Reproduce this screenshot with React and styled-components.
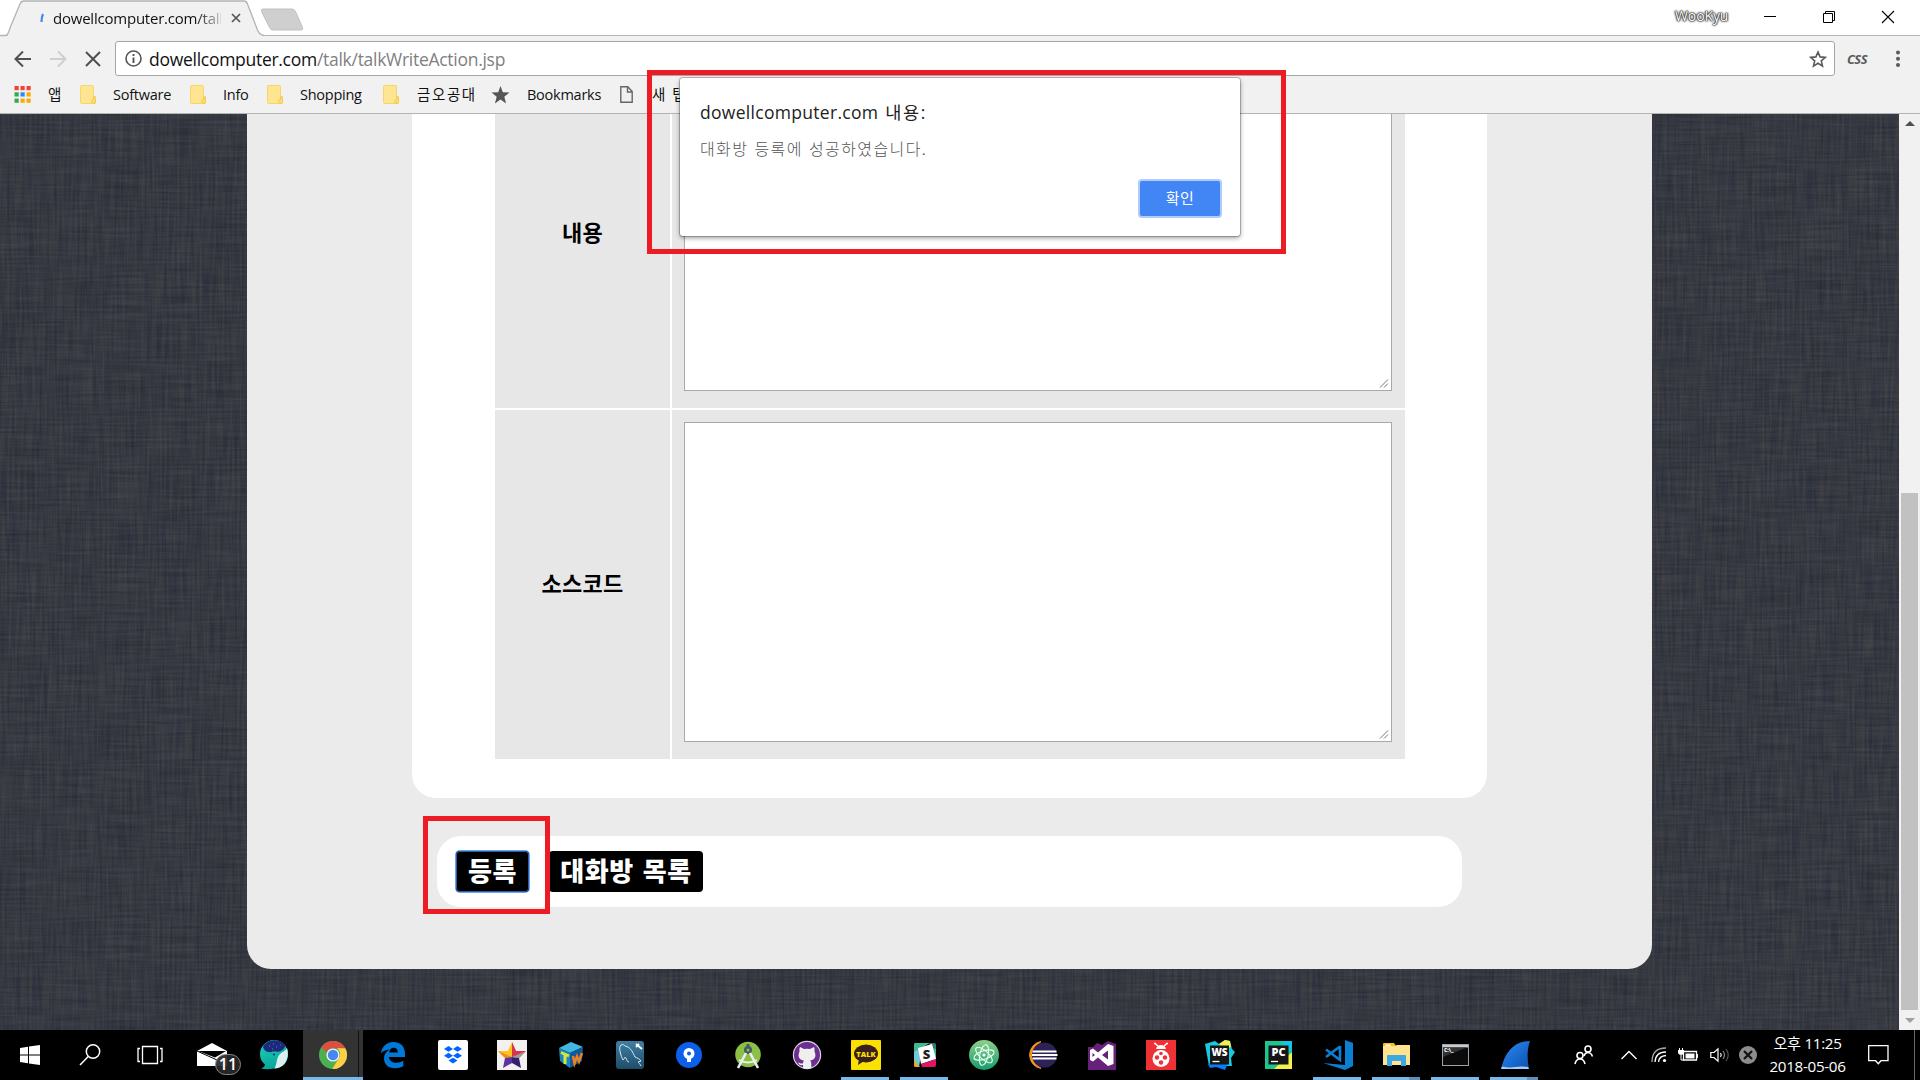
import React from "react";
import styled, { createGlobalStyle } from "styled-components";

const ui = '"Open Sans", "Noto Sans CJK KR", sans-serif';
const ko = '"Noto Sans CJK KR", sans-serif';

const Global = createGlobalStyle`
  *, *::before, *::after { box-sizing: border-box; }
  body { margin: 0; overflow: hidden; background: #000; }
  svg { display: block; flex: none; overflow: visible; }
`;

const Screen = styled.div`
  position: relative;
  display: flex;
  flex-direction: column;
  width: 1920px;
  height: 1080px;
  overflow: hidden;
  font-family: ${ui};
  color: #111;
`;

/* ---------- browser chrome ---------- */

const TitleBar = styled.header`
  display: flex;
  height: 36px;
  background: linear-gradient(#fff, #fff) top / 100% 35px no-repeat, #b4b4b4;
`;

const Tab = styled.div`
  position: relative;
  display: flex;
  align-items: center;
  width: 265px;
  height: 36px;
  padding-left: 40px;
`;

const TabShape = styled.svg`
  position: absolute;
  left: 0;
  top: 0;
`;

const TabTitle = styled.span`
  position: relative;
  margin-left: 9px;
  width: 168px;
  margin-right: 3px;
  height: 24px;
  line-height: 24px;
  overflow: hidden;
  white-space: nowrap;
  font-size: 15px;
  letter-spacing: -0.22px;
  -webkit-mask-image: linear-gradient(90deg, #000 142px, rgba(0, 0, 0, 0.2) 168px);
  mask-image: linear-gradient(90deg, #000 142px, rgba(0, 0, 0, 0.2) 168px);
`;

const Over = styled.span`
  position: relative;
  display: flex;
`;

const UserName = styled.span`
  margin-left: auto;
  width: 56px;
  line-height: 32px;
  font-size: 14px;
  letter-spacing: -0.1px;
  color: #fff;
  white-space: nowrap;
  text-shadow: 0 0 1px #222, 0 0 1px #222, 0 0 2px #333, 0 0 2px #444, 0 0 3px #888;
`;

const WindowControls = styled.div`
  display: flex;
  align-items: center;
  gap: 47px;
  height: 34px;
  padding: 0 26px 0 33px;
`;

const Toolbar = styled.div`
  display: flex;
  align-items: center;
  height: 46px;
  padding: 0 19px 0 14px;
  background: #f1f1f1;
`;

const NavButtons = styled.div`
  display: flex;
  flex: none;
  gap: 17px;
  width: 101px;
`;

const Omnibox = styled.div`
  display: flex;
  flex: none;
  align-items: center;
  width: 1720px;
  height: 35px;
  margin-top: -1px;
  padding: 0 7px 0 9px;
  border: 1px solid #a6a6a6;
  border-radius: 3px;
  background: #fff;
`;

const Url = styled.span`
  flex: 1;
  margin-left: 7px;
  font-size: 17.5px;
  line-height: 30px;
  letter-spacing: -0.28px;
  color: #808080;
  b { font-weight: 400; color: #111; }
`;

const CssBadge = styled.span`
  margin-left: 12px;
  margin-right: auto;
  font: italic 700 13px/20px "Open Sans", sans-serif;
  letter-spacing: -0.6px;
  color: #5a5a5a;
`;

const Bookmarks = styled.nav`
  display: flex;
  align-items: center;
  height: 32px;
  padding: 0 0 6px 14px;
  border-bottom: 1px solid #b4b4b4;
  background: #f1f1f1;
  white-space: nowrap;
`;

const Bookmark = styled.div`
  display: flex;
  align-items: center;
  gap: ${(p) => p.$gap || 17}px;
  width: ${(p) => p.$w}px;
  flex: none;
  font-size: 14.5px;
  line-height: 20px;
  letter-spacing: ${(p) => p.$ls || -0.25}px;
`;

/* ---------- page ---------- */

const Viewport = styled.main`
  position: relative;
  display: flex;
  height: 916px;
  overflow: hidden;
  background: #373a43;
`;

const Linen = styled.svg`
  position: absolute;
  inset: 0;
`;

const Container = styled.section`
  position: relative;
  width: 1405px;
  height: 855px;
  margin-left: 247px;
  border-radius: 0 0 24px 24px;
  background: #ebebeb;
  overflow: hidden;
`;

const Panel = styled.div`
  width: 1075px;
  height: 684px;
  margin-left: 165px;
  padding-left: 83px;
  border-radius: 0 0 24px 24px;
  background: #fff;
  overflow: hidden;
`;

const FormGrid = styled.div`
  display: grid;
  grid-template-columns: 175px 733px;
  grid-template-rows: 350px 349px;
  gap: 2px;
  margin-top: -56px;
`;

const Label = styled.div`
  display: flex;
  align-items: center;
  justify-content: center;
  padding-bottom: 5px;
  background: #e7e7e7;
  font: 700 22px/30px ${ko};
  letter-spacing: 0.2px;
  color: #000;
`;

const Field = styled.div`
  position: relative;
  padding: 12px 13px 0 12px;
  background: #e7e7e7;
`;

const Area = styled.textarea`
  display: block;
  width: 708px;
  height: ${(p) => p.$h}px;
  margin: 0;
  border: 1px solid #a9a9a9;
  border-radius: 0;
  background: #fff;
  outline: none;
  resize: none;
`;

const Grip = styled.svg`
  position: absolute;
  right: 16px;
  top: ${(p) => p.$y}px;
`;

const ButtonBar = styled.div`
  display: flex;
  align-items: flex-start;
  gap: 20px;
  width: 1025px;
  height: 71px;
  margin: 38px 0 0 190px;
  padding: 15px 0 0 19px;
  border-radius: 24px;
  background: #fff;
`;

const PageButton = styled.button`
  width: ${(p) => p.$w}px;
  height: 41px;
  padding: 0 0 4px;
  border: 0;
  border-radius: 4px;
  background: #000;
  box-shadow: ${(p) => (p.$focus ? "0 0 0 1px #6ea0f0, inset 0 0 0 1px #2d5ea8" : "none")};
  font: 900 26px/36px ${ko};
  letter-spacing: 0.6px;
  word-spacing: 2.5px;
  color: #fff;
  white-space: nowrap;
`;

const ScrollBar = styled.div`
  position: relative;
  display: flex;
  flex-direction: column;
  align-items: center;
  width: 21px;
  height: 916px;
  margin-left: auto;
  background: #f1f1f1;
`;

const ArrowBox = styled.div`
  display: flex;
  align-items: center;
  justify-content: center;
  height: 20px;
`;

const Thumb = styled.div`
  width: 17px;
  height: 518px;
  margin-top: 359px;
  background: #c1c1c1;
`;

/* ---------- overlays ---------- */

const Dialog = styled.div`
  position: absolute;
  left: 680px;
  top: 78px;
  width: 560px;
  height: 158px;
  display: flex;
  flex-direction: column;
  padding: 20px 20px 0;
  border-radius: 3px;
  background: #fff;
  box-shadow: 0 0 0 1px rgba(0, 0, 0, 0.22), 0 2px 5px rgba(0, 0, 0, 0.4);
`;

const DialogTitle = styled.div`
  height: 28px;
  font-size: 17.5px;
  line-height: 29px;
  letter-spacing: 0.3px;
  word-spacing: 2px;
  color: #222;
  white-space: nowrap;
  span { letter-spacing: 1.7px; }
`;

const DialogText = styled.div`
  margin-top: 10px;
  height: 24px;
  font: 300 16px/24px ${ko};
  letter-spacing: 1.4px;
  word-spacing: 1.2px;
  color: #555;
  white-space: nowrap;
`;

const DialogButton = styled.button`
  align-self: flex-end;
  width: 80px;
  height: 35px;
  margin-top: 21px;
  padding: 0 0 2px;
  border: 0;
  border-radius: 2px;
  background: #4285f4;
  box-shadow: 0 0 0 2px #b0ccfb;
  font: 400 15px/30px ${ko};
  letter-spacing: 0.5px;
  color: #fff;
`;

const Marker = styled.div`
  position: absolute;
  left: ${(p) => p.$x}px;
  top: ${(p) => p.$y}px;
  width: ${(p) => p.$w}px;
  height: ${(p) => p.$h}px;
  border: 5px solid #ed1c24;
`;

/* ---------- taskbar ---------- */

const Taskbar = styled.footer`
  display: flex;
  height: 50px;
  background: #000;
`;

const Slot = styled.div`
  position: relative;
  display: flex;
  align-items: center;
  justify-content: center;
  flex: none;
  width: ${(p) => p.$w || 59}px;
  height: 50px;
  background: ${(p) => (p.$active ? "#333" : "transparent")};
  color: #fff;
`;

const Underline = styled.i`
  position: absolute;
  left: ${(p) => (p.$full ? 0 : 5)}px;
  right: ${(p) => (p.$full ? 0 : 6)}px;
  bottom: 0;
  height: 3px;
  background: ${(p) =>
    p.$stack ? "linear-gradient(90deg, #76b9ed 77%, #5d8fb8 77%)" : "#76b9ed"};
`;

const StackEdge = styled.i`
  position: absolute;
  right: 0;
  top: 0;
  width: 5px;
  height: 50px;
  border-left: 1px solid #111;
`;

const Badge = styled.span`
  position: absolute;
  left: 35px;
  top: 24px;
  width: 26px;
  height: 21px;
  border: 1px solid #8a8a8a;
  border-radius: 11px;
  background: rgba(40, 40, 40, 0.93);
  font-size: 16px;
  font-weight: 600;
  line-height: 18px;
  text-align: center;
`;

const Tray = styled.div`
  display: flex;
  align-items: center;
  margin-left: auto;
  height: 50px;
  color: #fff;
`;

const TrayIcon = styled.div`
  display: flex;
  justify-content: center;
  width: ${(p) => p.$w}px;
`;

const Clock = styled.div`
  width: 99px;
  text-align: center;
  font-size: 15.2px;
  line-height: 23px;
  letter-spacing: -0.3px;
  padding-bottom: 1px;
  white-space: nowrap;
`;

const DesktopEdge = styled.div`
  width: 6px;
  height: 50px;
  margin-left: 15px;
  border-left: 1px solid #6a6a6a;
`;

const Folder = () => (
  <svg width="16" height="19" viewBox="0 0 16 19">
    <path d="M1.5 .5h11a1 1 0 0 1 1 1v10h1a1 1 0 0 1 1 1v4.500a1.500 1.500 0 0 1-1.500 1.500H1.500a1 1 0 0 1-1-1v-16a1 1 0 0 1 1-1z" fill="#ffe491" stroke="#f5d668" />
    <path d="M13.500 11.500v3q-2 .3-2 2t1.500 2h1q1.500 0 1.500-1.500v-4.500q0-1-1-1z" fill="#ffdc6b" stroke="#eecb52" />
  </svg>
);

const Apps = () => {
  const c = ["#f44336", "#f44336", "#f44336", "#34a853", "#2f8af5", "#fbab00", "#34a853", "#fbab00", "#fbab00"];
  return (
    <svg width="17" height="17">
      {c.map((f, i) => (
        <rect key={i} x={(i % 3) * 6 + 0.5} y={Math.floor(i / 3) * 6.3} width="4.200" height="4.200" fill={f} />
      ))}
    </svg>
  );
};

const ResizeGrip = ({ y }) => (
  <Grip $y={y} width="10" height="9" fill="none" stroke="#777" strokeWidth="1">
    <path d="M1 8.500L9 .5M5 8.500l4-4" />
  </Grip>
);

const Ic = ({ children, s = 30, ...rest }) => (
  <svg width={s} height={s} viewBox="0 0 30 30" fill="none" {...rest}>
    {children}
  </svg>
);

const Start = () => (
  <Ic><path fill="#fff" d="M5 8l8-1.200v7.700H5zM14 6.600L25 5v9.500H14zM5 15.500h8v7.700L5 22zM14 15.500h11V25l-11-1.600z" /></Ic>
);
const Search = () => (
  <Ic stroke="#fff" strokeWidth="1.500"><circle cx="18" cy="11.500" r="6.700" /><path d="M13.200 16.500L5 25" /></Ic>
);
const TaskView = () => (
  <Ic stroke="#fff" strokeWidth="1.300"><path d="M7.500 6.500h15v17h-15zM5 8.500H3v13h2M25 8.500h2v13h-2" /></Ic>
);
const Mail = () => (
  <Ic><path fill="#fff" d="M0 11L15 3l15 8v15H0z" /><path fill="#000" d="M1 11h28l-11 6.500z" /><path d="M0 11l20 9" stroke="#000" strokeWidth="1" /></Ic>
);
const Whale = () => (
  <Ic>
    <defs>
      <linearGradient id="wh" x1="0" y1="0" x2=".4" y2="1"><stop offset="0" stopColor="#1fd2c0" /><stop offset="1" stopColor="#08a696" /></linearGradient>
    </defs>
    <path fill="url(#wh)" d="M1 14C1 7 7 0 15 0s14 6 14 14.500S23 28.500 15 28.500c-4 1-9 1-13 0 2-1 4-2 4-4C3 22 1 19 1 14z" />
    <path fill="#dcefee" d="M28 8c3 10-2 20-12.500 20.500 2.500-5 2-9 4-12.500 2-4 6.500-4 8.500-8z" />
    <path fill="#1b2a7a" d="M4 6.500C9-1.500 22-1.500 26.500 5.500c-1 3-3 5-6 6-3 .8-5-.5-8 .5C8 13 4.500 10 4 6.500z" />
    <path fill="#12b8a8" d="M3 11c4 3 7 1.500 10 1 3-.4 5 .3 7 0-1 3-3 5-7 6z" />
    <circle cx="15" cy="14.500" r="1.100" fill="#1b2a7a" />
    <path d="M10 6h1M14 4h1M17 7h1M13 9h1M21 5h1" stroke="#6673c8" />
  </Ic>
);
const Chrome = () => (
  <Ic>
    <circle cx="15" cy="15" r="14" fill="#4caf50" />
    <path fill="#dd4f43" d="M15 1a14 14 0 0 1 12.200 7.200H15a7 7 0 0 0-6.300 4.200L3.400 7.200A14 14 0 0 1 15 1z" />
    <path fill="#ffce44" d="M27.200 8.200A14 14 0 0 1 14.200 29l6.800-11a7 7 0 0 0-2-9.800z" />
    <circle cx="15" cy="15" r="6.600" fill="#f1f1f1" /><circle cx="15" cy="15" r="5.200" fill="#4587f3" />
  </Ic>
);
const Edge = () => (
  <Ic><path fill="#0078d7" d="M3 13.500C4 6 9 2 15.500 2 23 2 27 7 27 13.500V17H11c.3 4 3.500 5.800 7.300 5.800 2.700 0 5-.8 7-2v5.500C23 27.500 20 28.300 17 28.300 10 28.300 6 24 6 18.500c0-4 2-7 5.500-8.900C7.500 10 5 11 3 13.500zm8.200-.9h8.600c0-3-1.500-4.800-4-4.800-2.600 0-4.300 2-4.600 4.800z" /></Ic>
);
const Dropbox = () => (
  <Ic>
    <rect width="30" height="30" rx="2" fill="#fff" />
    <path fill="#0062ff" d="M10.500 6l4.500 2.900-4.500 2.900L6 8.900zM19.500 6L24 8.900l-4.500 2.900L15 8.900zM10.500 12.800l4.500 2.900-4.500 2.900L6 15.700zM19.500 12.800l4.500 2.900-4.500 2.900-4.500-2.900zM15 17.800l4.500 2.800L15 23.500l-4.500-2.900z" />
  </Ic>
);
const Star = () => (
  <Ic>
    <rect width="30" height="30" fill="#f3f1ef" />
    <path fill="#f6a21c" d="M15 2l4 9h-4v6z" /><path fill="#ffc21f" d="M15 2l-4 9 4 6zM1 11h10l4 6-7 1z" />
    <path fill="#d8354a" d="M15 2l4 9-4 6zM19 11h10l-7 7-7-1z" /><path fill="#f08a20" d="M1 11l7 7 7-1z" />
    <path fill="#5a35a0" d="M8 18l7-1v6l-9 5z" /><path fill="#33206e" d="M15 17l7 1 2 10-9-5z" /><path fill="#9b9b9b" d="M22 18l7-7-14 6z" />
  </Ic>
);
const TeamCube = () => (
  <Ic>
    <path fill="#43b7df" d="M15 2l12 5-13 6L3 8z" /><path fill="#1c87bf" d="M3 8l11 5v15L4 21z" /><path fill="#12599c" d="M27 7l-13 6v15l12-7z" />
    <path d="M5 12.500l8 3.500M9 14.500V24" stroke="#d8e83a" strokeWidth="3" />
    <path d="M17 16l1.500 7.500 2.500-7 2 5L26 13" stroke="#f0821e" strokeWidth="2.400" />
  </Ic>
);
const MySql = () => (
  <Ic>
    <defs><linearGradient id="my" x1="0" y1="0" x2="0" y2="1"><stop offset="0" stopColor="#3f7fa6" /><stop offset="1" stopColor="#1f4d68" /></linearGradient></defs>
    <rect x="1" y="1" width="28" height="28" rx="3" fill="url(#my)" />
    <path d="M8 20C6 16 3 7 6 5c2-1 3 0 4 1 6 1 8 7 10 11 2 1 5 2 6 4l-3 1c1 1 2 2 3 4M8 20c2-1 1-4 3-2 1 2 1 4 3 4" stroke="#dce8ef" strokeWidth="1" />
    <path d="M21 4l6 5M21 7l3-3" stroke="#fff" strokeWidth="1.800" />
  </Ic>
);
const SourceTree = () => (
  <Ic><circle cx="15" cy="15" r="13" fill="#0b5fe8" /><circle cx="15" cy="13.500" r="5.500" fill="#fff" /><circle cx="15" cy="13.500" r="2" fill="#0b5fe8" /><path fill="#fff" d="M13 17h4v5h-4z" /></Ic>
);
const AndroidStudio = () => (
  <Ic>
    <circle cx="15" cy="14.500" r="12.800" fill="#8bbf45" /><circle cx="15" cy="10" r="4" fill="#455a64" /><circle cx="15" cy="10" r="1.500" fill="#8bbf45" />
    <path d="M15 4v3" stroke="#455a64" strokeWidth="3" /><path d="M13 13L5 28M17 13l8 15" stroke="#eceff1" strokeWidth="2.600" /><path d="M6 20q9 5 18 0" stroke="#eceff1" strokeWidth="2" />
  </Ic>
);
const GitHub = () => (
  <Ic>
    <circle cx="15" cy="15" r="13.600" fill="#6e2e91" stroke="#ded3e4" strokeWidth="1.200" />
    <path fill="#eee" d="M8 7l4 2q3-.7 6 0l4-2q1 2 .5 4.500C25 17 22 20 18 20.500c1 1 1.300 2 1.300 3.500v4q-4.300 1.500-8.300 0v-3c-3 .6-4-.6-5-2.500 2 .3 2.500 1.500 5 .8.200-1.500.5-2.200 1-2.800-4-.5-7-3.500-4.500-9Q7 9 8 7z" />
  </Ic>
);
const TinyText = styled.text`
  font-family: "Open Sans", sans-serif;
  font-weight: 800;
`;
const Kakao = () => (
  <Ic>
    <rect width="30" height="30" rx="1" fill="#fae100" /><ellipse cx="15" cy="13.500" rx="12" ry="9" fill="#3b1e1e" /><path fill="#3b1e1e" d="M8 19l-1 6 6-4z" />
    <TinyText x="15" y="16.500" fontSize="7.500" textAnchor="middle" fill="#fae100">TALK</TinyText>
  </Ic>
);
const Slack = () => (
  <Ic>
    <path fill="#70cadb" d="M4 5q0-2 2-2h7L9 27H6q-2 0-2-2z" /><path fill="#3eb991" d="M4 5q0-2 2-2h14L4 12z" />
    <path fill="#2f7d77" d="M20 3h4q2 0 2 2v5l-8-2z" /><path fill="#3eb991" d="M23 8l3 1v10l-2 1z" /><path fill="#e9a820" d="M4 20l6 7H6q-2 0-2-2z" />
    <path fill="#fff" d="M8 8l14-4 4 15-15 5z" /><TinyText x="16.500" y="19" fontSize="13" textAnchor="middle" fill="#222">S</TinyText>
    <path fill="#e01563" d="M11 24l15-5v6q0 2-2 2H12z" />
  </Ic>
);
const Atom = () => (
  <Ic>
    <defs><linearGradient id="at" x1="0" y1="0" x2="0" y2="1"><stop offset="0" stopColor="#8fd08a" /><stop offset="1" stopColor="#159c6c" /></linearGradient></defs>
    <circle cx="15" cy="15" r="15" fill="url(#at)" />
    <g stroke="#e8fff2" strokeWidth="1.100"><ellipse cx="15" cy="15" rx="4.200" ry="10.500" transform="rotate(12 15 15)" /><ellipse cx="15" cy="15" rx="4.200" ry="10.500" transform="rotate(72 15 15)" /><ellipse cx="15" cy="15" rx="4.200" ry="10.500" transform="rotate(132 15 15)" /></g>
    <circle cx="15" cy="15" r="1.600" fill="#fff" />
  </Ic>
);
const Eclipse = () => (
  <Ic>
    <path d="M13 1.500A13.700 13.700 0 0 0 13 28.500 17 17 0 0 1 13 1.500z" fill="#f7941e" stroke="#f7941e" strokeWidth="1" /><circle cx="16.500" cy="15" r="12.600" fill="#2c2255" />
    <path stroke="#fff" strokeWidth="2" d="M4.500 11.500h24M4 15h25.500M4.500 18.500h24" />
  </Ic>
);
const VisualStudio = () => (
  <Ic>
    <path fill="#68217a" d="M1 7h5l4-4 5 2 6-4 8 3v26H1z" />
    <path fill="#fff" fillRule="evenodd" d="M3 10l3-1.500 5 4L21 4l5.500 2v18L21 26l-10-8.500-5 4L3 20zm2.500 3v4l2.500-2zM21 10.500L15 15l6 4.500z" />
  </Ic>
);
const Ladybug = () => (
  <Ic>
    <rect width="30" height="30" fill="#ee3135" />
    <path d="M9 3.500l3 2.500M21 3.500L18 6M8 3.500h2M20 3.500h2" stroke="#fff" strokeWidth="1.500" /><path fill="#fff" d="M10 9q1-4 5-4t5 4z" />
    <circle cx="15" cy="18.500" r="8.500" fill="#fff" /><g fill="#ee3135"><circle cx="15" cy="13.500" r="1.800" /><circle cx="11" cy="17.500" r="2.200" /><circle cx="19" cy="17.500" r="2.200" /><circle cx="15" cy="22.500" r="2.200" /></g>
  </Ic>
);
const WebStorm = () => (
  <Ic>
    <path fill="#18c9e0" d="M0 4l10-3 4 3 6-4 5 1 2 8 3 3-4 6 1 8H4z" /><path fill="#f4f04e" d="M14 4l6-4 5 1 1 6-7 3z" /><path fill="#087cfa" d="M3 24l8-2 12 1-3 7-9-3-6 1z" />
    <rect x="5" y="5.500" width="19" height="19" fill="#161616" /><TinyText x="14.500" y="15.500" fontSize="10" textAnchor="middle" fill="#fff">WS</TinyText><path stroke="#fff" strokeWidth="1.300" d="M7.500 21.500h7" />
  </Ic>
);
const PyCharm = () => (
  <Ic>
    <path fill="#1fc58e" d="M1 1h27v28H1z" /><path fill="#f4f04e" d="M28 12v17H10z" /><path fill="#16c5e3" d="M16 1h12v12z" />
    <rect x="4.500" y="5.500" width="20" height="19" fill="#161616" /><TinyText x="14.500" y="16" fontSize="11" textAnchor="middle" fill="#fff">PC</TinyText><path stroke="#fff" strokeWidth="1.300" d="M7 21.500h7" />
  </Ic>
);
const VSCode = () => (
  <Ic>
    <path fill="#0a7fd4" d="M22 0l8 3v23l-8 4L0 23l22 2z" />
    <path d="M17 6v14L3 9.500M17 6.500L3 17" stroke="#0a7fd4" strokeWidth="2.600" />
  </Ic>
);
const Explorer = () => (
  <Ic>
    <path fill="#f7bd1d" d="M1 4q0-1 1-1h10l2 3H1z" /><path fill="#fff" d="M3.500 4.500h5v1.500h-5z" /><path fill="#ffe38f" d="M1 6h12l2-1h13v20H1z" />
    <path fill="#3ba9e0" d="M5 16q0-1 1-1h17q1 0 1 1v10h-5v-5h-9v5H5z" />
  </Ic>
);
const Cmd = () => (
  <Ic>
    <rect x="1.500" y="4.500" width="26" height="21" fill="#0b0b0b" stroke="#9aa3a8" /><path fill="#c7ccd0" d="M2 5h25v2.500H2z" /><path fill="#333" d="M2 7.500h24L2 17z" />
    <TinyText x="3" y="12" fontSize="5" fill="#fff">C:\_</TinyText>
  </Ic>
);
const Wireshark = () => (
  <Ic>
    <defs><linearGradient id="ws" x1="0" y1="0" x2="1" y2="1"><stop offset="0" stopColor="#2d8cf5" /><stop offset="1" stopColor="#0a4fb0" /></linearGradient></defs>
    <path fill="url(#ws)" d="M1 29C5 12 14 1 30 1c-3 8-3 18-1 28z" /><path fill="#a9cdf8" d="M1 29l1-2.500q7 1.500 13 .5t13 0l1 2z" />
  </Ic>
);

const apps = [
  { icon: <Whale />, id: "whale" },
  { icon: <Chrome />, id: "chrome", active: true, w: 60 },
  { icon: <Edge />, id: "edge", w: 60 },
  { icon: <Dropbox />, id: "dropbox" },
  { icon: <Star />, id: "star" },
  { icon: <TeamCube />, id: "cube" },
  { icon: <MySql />, id: "mysql" },
  { icon: <SourceTree />, id: "sourcetree" },
  { icon: <AndroidStudio />, id: "android" },
  { icon: <GitHub />, id: "github" },
  { icon: <Kakao />, id: "kakao", open: true },
  { icon: <Slack />, id: "slack", open: true },
  { icon: <Atom />, id: "atom" },
  { icon: <Eclipse />, id: "eclipse" },
  { icon: <VisualStudio />, id: "vs" },
  { icon: <Ladybug />, id: "ladybug" },
  { icon: <WebStorm />, id: "webstorm" },
  { icon: <PyCharm />, id: "pycharm" },
  { icon: <VSCode />, id: "vscode", open: true },
  { icon: <Explorer />, id: "explorer", open: true, stack: true },
  { icon: <Cmd />, id: "cmd", open: true },
  { icon: <Wireshark />, id: "wireshark", open: true, stack: true },
];

export default function App() {
  return (
    <Screen>
      <Global />
      <TitleBar>
        <Tab>
          <TabShape width="310" height="36" fill="none">
            <path d="M7 36C10 34 9 31 10 28L20 4q1-3 4-3h220q2.500 0 3.500 3l10 26q2 5 6.500 6z" fill="#f1f1f1" />
            <path d="M0 35.500h6C9 34 9 31 10 28L20 4q1-3 4-3h220q2.500 0 3.500 3l10 26q2 5 6.500 5.500" stroke="#b4b4b4" strokeWidth="1.300" />
            <path d="M263 9h29q2.500 0 3.500 2.500l7 16q.8 2.500-1.500 2.500h-28q-2.500 0-3.500-2.500l-8-16q-.8-2.500 1.500-2.500z" fill="#cfcfcf" stroke="#c0c0c0" />
          </TabShape>
          <Over><svg width="4" height="8"><path d="M3 0q-1.500 3-1.500 8" stroke="#4285f4" strokeWidth="2.200" fill="none" /></svg></Over>
          <TabTitle>dowellcomputer.com/talk</TabTitle>
          <Over><svg width="20" height="10"><path d="M8 1l8 8M16 1L8 9" stroke="#555" strokeWidth="1.700" /></svg></Over>
        </Tab>
        <UserName>WooKyu</UserName>
        <WindowControls>
          <svg width="12" height="12"><path d="M0 5.500h12" stroke="#000" /></svg>
          <svg width="12" height="12" fill="none" stroke="#000" strokeWidth="1"><path d="M.5 2.500h9v9h-9zM2.500 2V.5h9v9H10" /></svg>
          <svg width="12" height="12"><path d="M0 0l12 12M12 0L0 12" stroke="#000" strokeWidth="1.100" /></svg>
        </WindowControls>
      </TitleBar>

      <Toolbar>
        <NavButtons>
          <svg width="18" height="18" fill="none" stroke="#505050" strokeWidth="2"><path d="M17 9H2M9 1.500L1.500 9 9 16.500" /></svg>
          <svg width="18" height="18" fill="none" stroke="#cfcfcf" strokeWidth="2"><path d="M1 9h15M9 1.500L16.500 9 9 16.500" /></svg>
          <svg width="18" height="18" fill="none" stroke="#505050" strokeWidth="2"><path d="M2 2l14 14M16 2L2 16" /></svg>
        </NavButtons>
        <Omnibox>
          <svg width="17" height="17" fill="none" stroke="#555" strokeWidth="1.600"><circle cx="8.500" cy="8.500" r="7.500" /><path d="M8.500 7.500V13M8.500 4v2" strokeWidth="1.900" /></svg>
          <Url><b>dowellcomputer.com</b>/talk/talkWriteAction.jsp</Url>
          <svg width="18" height="18" viewBox="0 0 18 18"><path d="M9 2l2.100 4.900 5.200.5-4 3.500 1.200 5.200L9 13.300l-4.500 2.800 1.200-5.200-4-3.500 5.200-.5z" fill="none" stroke="#5a5a5a" strokeWidth="1.600" /></svg>
        </Omnibox>
        <CssBadge>CSS</CssBadge>
        <svg width="6" height="18"><g fill="#5a5a5a"><circle cx="3" cy="2.500" r="2" /><circle cx="3" cy="8.800" r="2" /><circle cx="3" cy="15" r="2" /></g></svg>
      </Toolbar>

      <Bookmarks>
        <Bookmark $w={66}><Apps />앱</Bookmark>
        <Bookmark $w={110}><Folder />Software</Bookmark>
        <Bookmark $w={77}><Folder />Info</Bookmark>
        <Bookmark $w={116}><Folder />Shopping</Bookmark>
        <Bookmark $w={108} $gap={18} $ls={1.6}><Folder />금오공대</Bookmark>
        <Bookmark $w={129}>
          <svg width="19" height="18" viewBox="0 0 19 18"><path d="M9.500 0l2.300 6.300 6.700.3-5.200 4.200 1.800 6.700-5.600-3.900-5.600 3.900 1.800-6.700L.5 6.600l6.700-.3z" fill="#555" /></svg>
          Bookmarks
        </Bookmark>
        <Bookmark $w={90} $gap={19} $ls={1.6}>
          <svg width="13" height="17" fill="none" stroke="#666" strokeWidth="1.400"><path d="M.8.800h7l4.400 4.700v10.700H.8zM7.500 1v5h4.500" /></svg>
          새 탭
        </Bookmark>
      </Bookmarks>

      <Viewport>
        <Linen width="1899" height="916">
          <filter id="weft" x="0" y="0" width="100%" height="100%" colorInterpolationFilters="sRGB">
            <feTurbulence type="fractalNoise" baseFrequency="0.02 0.4" numOctaves="2" seed="4" />
            <feColorMatrix values="0.17 0 0 0 0.128  0.17 0 0 0 0.140  0.18 0 0 0 0.168  0 0 0 0 1" />
          </filter>
          <filter id="warp" x="0" y="0" width="100%" height="100%" colorInterpolationFilters="sRGB">
            <feTurbulence type="fractalNoise" baseFrequency="0.4 0.02" numOctaves="2" seed="9" />
            <feColorMatrix values="0.22 0 0 0 0.106  0.18 0 0 0 0.135  0.10 0 0 0 0.205  0 0 0 0 1" />
          </filter>
          <rect width="1899" height="916" filter="url(#weft)" />
          <rect width="1899" height="916" filter="url(#warp)" opacity="0.5" />
        </Linen>
        <Container>
          <Panel>
            <FormGrid>
              <Label>내용</Label>
              <Field><Area $h={321} /><ResizeGrip y={321} /></Field>
              <Label>소스코드</Label>
              <Field><Area $h={320} /><ResizeGrip y={320} /></Field>
            </FormGrid>
          </Panel>
          <ButtonBar>
            <PageButton $w={73} $focus>등록</PageButton>
            <PageButton $w={154}>대화방 목록</PageButton>
          </ButtonBar>
        </Container>
        <ScrollBar>
          <ArrowBox><svg width="10" height="5"><path d="M0 5l5-5 5 5z" fill="#505050" /></svg></ArrowBox>
          <Thumb />
          <ArrowBox><svg width="10" height="5"><path d="M0 0l5 5 5-5z" fill="#a0a0a0" /></svg></ArrowBox>
        </ScrollBar>
      </Viewport>

      <Taskbar>
        <Slot $w={60}><Start /></Slot>
        <Slot $w={60}><Search /></Slot>
        <Slot $w={60}><TaskView /></Slot>
        <Slot $w={64}><Mail /><Badge>11</Badge></Slot>
        {apps.map((a) => (
          <Slot key={a.id} $active={a.active} $w={a.w}>
            {a.icon}
            {a.active && <StackEdge />}
            {(a.active || a.open) && <Underline $full={a.active} $stack={a.stack} />}
          </Slot>
        ))}
        <Tray>
          <TrayIcon $w={62}>
            <svg width="20" height="20" fill="none" stroke="#fff" strokeWidth="1.600"><circle cx="14" cy="4" r="3" /><path d="M10 11q1-3.500 4-3.500t4.500 4" /><circle cx="6" cy="10.500" r="3" /><path d="M1 19q1-5 5-5t5 5" /></svg>
          </TrayIcon>
          <TrayIcon $w={28}><svg width="16" height="10"><path d="M.5 9L8 1.500 15.500 9" stroke="#fff" strokeWidth="1.400" fill="none" /></svg></TrayIcon>
          <TrayIcon $w={31}>
            <svg width="16" height="16" fill="none" stroke="#fff" strokeWidth="1.300"><path d="M1 15Q1 1 15 1" stroke="#aaa" /><path d="M4 15Q4.500 5 15 5M7.500 15Q8 9 15 8.500" /><circle cx="13.500" cy="13.500" r="1.600" fill="#fff" stroke="none" /></svg>
          </TrayIcon>
          <TrayIcon $w={28}>
            <svg width="20" height="14"><path d="M5.500 3.500h13v8.500h-13z" fill="none" stroke="#fff" strokeWidth="1.300" /><path d="M7.500 5.500h9v5h-9zM18.500 6h1.500v4h-1.500zM0 2h6v3q-1 2-3 2t-3-2zM1 0h1v2H1zM4 0h1v2H4z" fill="#fff" /><path d="M3 7v5h3" stroke="#fff" fill="none" /></svg>
          </TrayIcon>
          <TrayIcon $w={36}>
            <svg width="20" height="14" fill="none" stroke="#fff" strokeWidth="1.200"><path d="M.8 4.500H4L8 .8v12.400L4 9.500H.8z" /><path d="M10.500 5q1.500 2 0 4" /><path d="M13 3q3 4 0 8" stroke="#888" /><path d="M16 1q4.500 6 0 12" stroke="#555" /></svg>
          </TrayIcon>
          <TrayIcon $w={20}>
            <svg width="18" height="18"><circle cx="9" cy="9" r="9" fill="#8c8c8c" /><path d="M5 5l8 8M13 5l-8 8" stroke="#111" strokeWidth="2.200" /></svg>
          </TrayIcon>
          <Clock>오후 11:25<br />2018-05-06</Clock>
          <TrayIcon $w={42}><svg width="21" height="20" fill="none" stroke="#fff" strokeWidth="1.300"><path d="M.7.700h19.300v15H13l-2.700 3-2.700-3H.7z" /></svg></TrayIcon>
          <DesktopEdge />
        </Tray>
      </Taskbar>

      <Dialog role="alertdialog">
        <DialogTitle>dowellcomputer.com <span>내용:</span></DialogTitle>
        <DialogText>대화방 등록에 성공하였습니다.</DialogText>
        <DialogButton>확인</DialogButton>
      </Dialog>

      <Marker $x={647} $y={70} $w={639} $h={184} />
      <Marker $x={423} $y={816} $w={127} $h={98} />
    </Screen>
  );
}
